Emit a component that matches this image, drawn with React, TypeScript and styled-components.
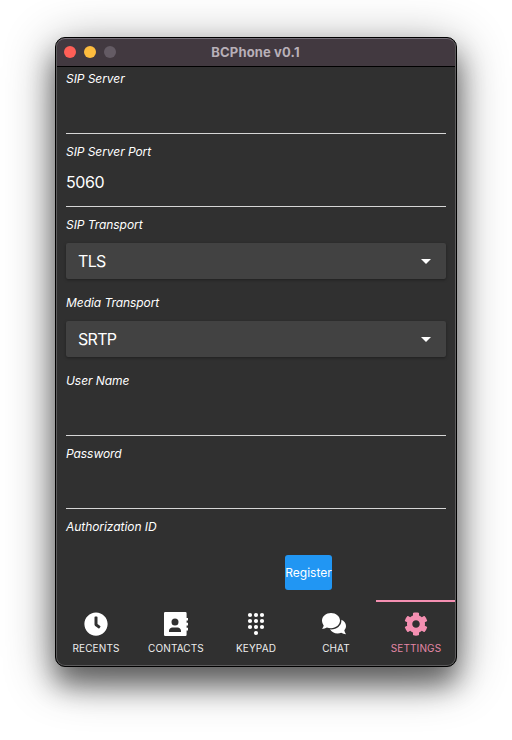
import React from 'react';
import styled, { createGlobalStyle } from 'styled-components';
import { FaClock, FaCog } from 'react-icons/fa';

const GlobalStyle = createGlobalStyle`
  * { box-sizing: border-box; }
  body { margin: 0; background: #fff; font-family: Inter, sans-serif; }
`;

const Desktop = styled.main`
  width: 512px;
  height: 740px;
  padding: 37px 55px;
  overflow: hidden;
`;

const Window = styled.section`
  width: 402px;
  height: 630px;
  display: flex;
  flex-direction: column;
  border: 1px solid #000;
  border-radius: 10px;
  overflow: hidden;
  background: #303030;
  position: relative;
  box-shadow: 0 18px 27px rgba(0, 0, 0, 0.46), 0 10px 50px rgba(0, 0, 0, 0.44);

  &::after {
    content: '';
    position: absolute;
    inset: 0;
    border: 1px solid #5c5b5c;
    border-top-color: #77717a;
    border-radius: 9px;
    pointer-events: none;
  }
`;

const TitleBar = styled.header`
  flex: 0 0 29px;
  display: grid;
  grid-template-columns: 80px 1fr 80px;
  align-items: center;
  background: #423940;
  border-bottom: 1px solid #000;
`;

const Lights = styled.div`
  display: flex;
  gap: 8px;
  padding-left: 8px;
`;

const Light = styled.span<{ $color: string }>`
  width: 12px;
  height: 12px;
  border-radius: 50%;
  background: ${(p) => p.$color};
`;

const Title = styled.h1`
  margin: 0 1px 0 0;
  text-align: center;
  font-size: 13px;
  line-height: 16px;
  font-weight: 700;
  letter-spacing: 0.15px;
  color: #b8b0b8;
`;

const Form = styled.form`
  flex: 0 0 488px;
  padding: 0 10px;
  overflow: hidden;
`;

const Field = styled.div<{ $height: number }>`
  height: ${(p) => p.$height}px;
  display: flex;
  flex-direction: column;
`;

const Label = styled.label`
  height: 24px;
  line-height: 24px;
  font-size: 12px;
  font-style: italic;
  letter-spacing: -0.06px;
  color: #fff;
`;

const Input = styled.input`
  height: 43px;
  padding: 0 0 7px;
  border: 0;
  border-bottom: 1px solid #d6d6d6;
  outline: 0;
  background: transparent;
  color: #fff;
  font: 16px Inter, sans-serif;
  letter-spacing: -0.4px;
`;

const Select = styled.button`
  height: 36px;
  margin-top: 6px;
  padding: 0 15px 0 12px;
  display: flex;
  align-items: center;
  justify-content: space-between;
  border: 0;
  border-radius: 2px;
  background: #424242;
  box-shadow: 0 1px 3px rgba(0, 0, 0, 0.35);
  color: #fff;
  font: 16px Inter, sans-serif;
  letter-spacing: -0.7px;
`;

const Actions = styled.div`
  flex: 0 0 45px;
  padding-left: 229px;
`;

const Register = styled.button`
  width: 47px;
  height: 35px;
  padding: 0;
  border: 0;
  border-radius: 3px;
  background: #2196f3;
  color: #fff;
  font: 12px Inter, sans-serif;
  display: flex;
  align-items: center;
  justify-content: center;
`;

const Tabs = styled.nav`
  flex: 1;
  display: grid;
  grid-template-columns: repeat(5, 1fr);
  position: relative;
  z-index: 0;
`;

const Tab = styled.a<{ $active?: boolean }>`
  display: flex;
  flex-direction: column;
  align-items: center;
  padding-top: 10px;
  gap: 5px;
  border-top: 2px solid ${(p) => (p.$active ? '#f48fb1' : 'transparent')};
  color: ${(p) => (p.$active ? '#f48fb1' : '#fff')};
  font-size: 10px;
  line-height: 14px;
  letter-spacing: 0.12px;

  svg { width: 24px; height: 24px; display: block; }
`;

const TabText = styled.span`
  opacity: 0.92;
`;

const Caret = () => (
  <svg width="10" height="5" viewBox="0 0 10 5"><path d="M0 0h10L5 5z" fill="#fff" /></svg>
);

const ContactsIcon = () => (
  <svg viewBox="0 0 24 24" fill="currentColor">
    <path
      fillRule="evenodd"
      d="M1.2 0H21.4a1.2 1.2 0 0 1 1.2 1.2V6H24v2.6h-1.4v2.2H24v2.8h-1.4v2.2H24v2.6h-1.4v4.4a1.2 1.2 0 0 1-1.2 1.2H1.2A1.2 1.2 0 0 1 0 22.8V1.2A1.2 1.2 0 0 1 1.2 0zM11 6.6a3.5 3.5 0 1 0 0 7 3.5 3.5 0 0 0 0-7zM5 20h12v-1.2c0-2-1.6-3.4-3.4-3.4H8.4C6.6 15.4 5 16.8 5 18.8z"
    />
  </svg>
);

const KeypadIcon = () => (
  <svg viewBox="0 0 24 24" fill="currentColor">
    {[3, 9, 15].flatMap((y) => [6, 12, 18].map((x) => <circle key={`${x}-${y}`} cx={x} cy={y} r="2.1" />))}
    <circle cx="12" cy="21" r="2.1" />
  </svg>
);

const ChatIcon = () => (
  <svg viewBox="2 0 24 24" fill="currentColor" overflow="visible">
    <path d="M9 1C13.9 1 18 4.3 18 8.6S13.9 16.2 9 16.2c-1.5 0-2.9-.3-4.1-.8C3.5 16.2 1.7 16.7 0 16.7c.9-1 1.500-2.200 1.700-3.300C.6 12.100 0 10.400 0 8.600 0 4.300 4.100 1 9 1z" />
    <path d="M19.3 7.8c2.8 1 4.7 3.4 4.7 6.200 0 1.700-.6 3.100-1.700 4.300.2 1.400.8 2.700 1.700 3.900-1.700 0-3.400-.5-4.800-1.400-1.100.5-2.300.7-3.600.7-3.400 0-6.300-1.700-7.500-4.200.4 0 .7.100 1.100.1 5.600 0 10.200-3.900 10.200-8.700 0-.3 0-.6-.1-.9z" />
  </svg>
);

type FieldData = { label: string; value: string; kind: 'text' | 'select' };

const fields: FieldData[] = [
  { label: 'SIP Server', value: '', kind: 'text' },
  { label: 'SIP Server Port', value: '5060', kind: 'text' },
  { label: 'SIP Transport', value: 'TLS', kind: 'select' },
  { label: 'Media Transport', value: 'SRTP', kind: 'select' },
  { label: 'User Name', value: '', kind: 'text' },
  { label: 'Password', value: '', kind: 'text' },
];

const tabs = [
  { text: 'RECENTS', Icon: FaClock },
  { text: 'CONTACTS', Icon: ContactsIcon },
  { text: 'KEYPAD', Icon: KeypadIcon },
  { text: 'CHAT', Icon: ChatIcon },
  { text: 'SETTINGS', Icon: FaCog, active: true },
];

export default function App() {
  return (
    <>
      <GlobalStyle />
      <Desktop>
        <Window>
          <TitleBar>
            <Lights>
              <Light $color="#ff5f57" />
              <Light $color="#febc3e" />
              <Light $color="#645b64" />
            </Lights>
            <Title>BCPhone v0.1</Title>
          </TitleBar>
          <Form>
            {fields.map((f) => (
              <Field key={f.label} $height={f.kind === 'text' ? 73 : 78}>
                <Label>{f.label}</Label>
                {f.kind === 'text' ? (
                  <Input defaultValue={f.value} />
                ) : (
                  <Select type="button">{f.value}<Caret /></Select>
                )}
              </Field>
            ))}
            <Label>Authorization ID</Label>
          </Form>
          <Actions><Register>Register</Register></Actions>
          <Tabs>
            {tabs.map(({ text, Icon, active }) => (
              <Tab key={text} $active={active}>
                <Icon />
                <TabText>{text}</TabText>
              </Tab>
            ))}
          </Tabs>
        </Window>
      </Desktop>
    </>
  );
}
